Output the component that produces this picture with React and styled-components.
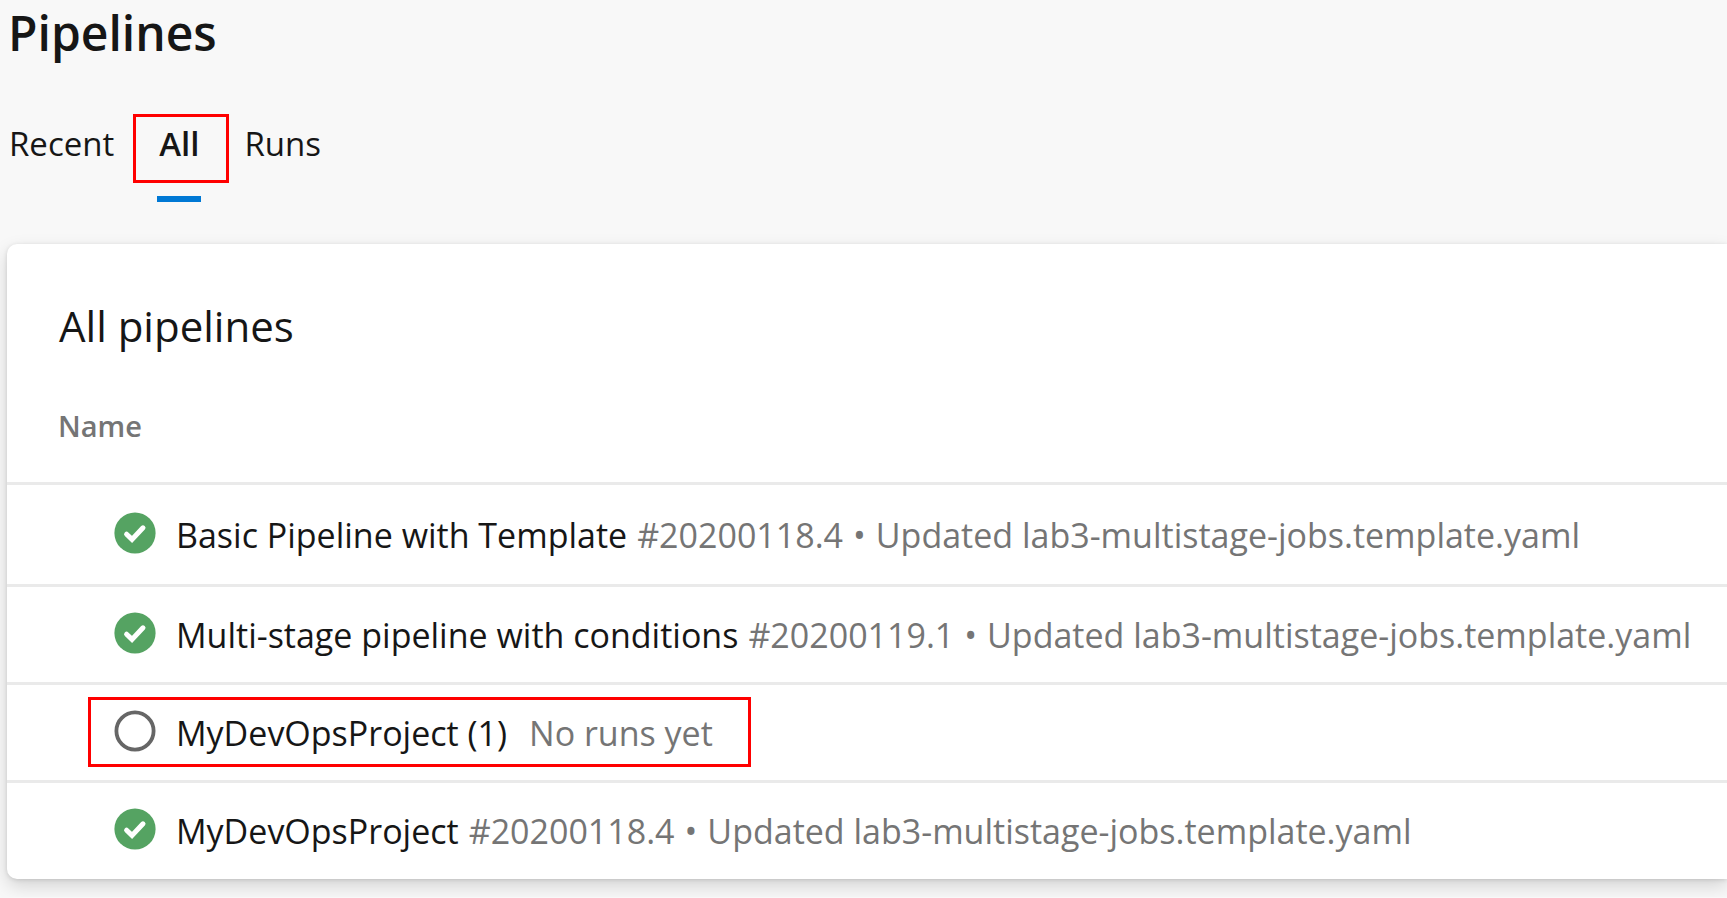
import React, { useState } from "react";
import styled, { createGlobalStyle, css } from "styled-components";

const GlobalStyle = createGlobalStyle`
  *, *::before, *::after { box-sizing: border-box; }
  body {
    margin: 0;
    background: #f8f8f8;
    color: #161616;
    font-family: "Segoe UI", "Open Sans", "Noto Sans", sans-serif;
  }
`;

const highlightFrame = css`
  content: "";
  position: absolute;
  border: 3px solid #ff0000;
  pointer-events: none;
`;

const Page = styled.main`
  display: flex;
  flex-direction: column;
  padding: 0 0 18px 7px;
  overflow-x: hidden;
`;

const PageTitle = styled.h1`
  margin: 0;
  padding-left: 1px;
  font-size: 48px;
  font-weight: 600;
  line-height: 66px;
`;

const Tabs = styled.div`
  display: flex;
  gap: 43px;
  margin-top: 48px;
  padding-left: 2px;
`;

const Tab = styled.button`
  position: relative;
  height: 88px;
  padding: 0 ${(p) => (p.$active ? "2px" : "0")} 22px;
  border: 0;
  border-bottom: 6px solid ${(p) => (p.$active ? "#0078d4" : "transparent")};
  background: none;
  color: inherit;
  font-family: inherit;
  font-size: 33px;
  font-weight: ${(p) => (p.$active ? 600 : 400)};
  line-height: 60px;
  cursor: pointer;

  ${(p) =>
    p.$highlighted &&
    css`
      &::after {
        ${highlightFrame}
        inset: 0 -28px 13px -24px;
      }
    `}
`;

const Card = styled.section`
  margin-top: 42px;
  padding: 52px 0 1px;
  border-radius: 10px 0 0 10px;
  background: #ffffff;
  box-shadow: 0 7px 18px rgba(0, 0, 0, 0.15), 0 1px 4px rgba(0, 0, 0, 0.12);
`;

const CardTitle = styled.h2`
  margin: 0 0 50px;
  padding-left: 52px;
  font-size: 42px;
  font-weight: 400;
  line-height: 60px;
`;

const Table = styled.table`
  width: 100%;
  border-collapse: separate;
  border-spacing: 0;
`;

const HeaderCell = styled.th`
  padding: 0 0 36px 51px;
  color: #757575;
  font-size: 29px;
  font-weight: 600;
  line-height: 40px;
  text-align: left;
`;

const Row = styled.tr`
  &:first-child > td { padding-top: 2px; padding-bottom: 2px; }
`;

const Cell = styled.td`
  padding: 0 0 0 107px;
  border-top: 3px solid #eaeaea;
`;

const Pipeline = styled.div`
  position: relative;
  display: inline-flex;
  align-items: center;
  gap: 20px;
  height: 95px;
  vertical-align: top;
  font-size: 34px;
  line-height: 48px;
  white-space: nowrap;

  ${(p) =>
    p.$highlighted &&
    css`
      &::after {
        ${highlightFrame}
        inset: 12px -38px 13px -26px;
      }
    `}
`;

const StatusIcon = styled.svg`
  flex: none;
  width: 42px;
  height: 42px;
  margin-bottom: 4px;
`;

const Details = styled.div`
  display: flex;
  gap: ${(p) => (p.$wide ? "22px" : "10px")};
`;

const PipelineLink = styled.a`
  color: inherit;
  text-decoration: none;
`;

const Meta = styled.span`
  color: #757575;
`;

const pipelines = [
  { name: "Basic Pipeline with Template", run: "#20200118.4", message: "Updated lab3-multistage-jobs.template.yaml" },
  { name: "Multi-stage pipeline with conditions", run: "#20200119.1", message: "Updated lab3-multistage-jobs.template.yaml" },
  { name: "MyDevOpsProject (1)", highlighted: true },
  { name: "MyDevOpsProject", run: "#20200118.4", message: "Updated lab3-multistage-jobs.template.yaml" },
];

function Status({ succeeded }) {
  return succeeded ? (
    <StatusIcon viewBox="0 0 42 42" role="img" aria-label="Succeeded">
      <circle cx="21" cy="21" r="20.6" fill="#55a362" />
      <path d="M12.6 22.2 L18 27.4 L29 15.8" fill="none" stroke="#fff" strokeWidth="5" strokeLinecap="round" />
    </StatusIcon>
  ) : (
    <StatusIcon viewBox="0 0 42 42" role="img" aria-label="Not run">
      <circle cx="21" cy="21" r="18.6" fill="none" stroke="#666" strokeWidth="3.8" />
    </StatusIcon>
  );
}

function PipelineRow({ name, run, message, highlighted }) {
  return (
    <Row>
      <Cell>
        <Pipeline $highlighted={highlighted}>
          <Status succeeded={Boolean(run)} />
          <Details $wide={!run}>
            <PipelineLink href="#">{name}</PipelineLink>
            {run ? (
              <>
                <Meta>{run}</Meta>
                <Meta>•</Meta>
                <Meta>{message}</Meta>
              </>
            ) : (
              <Meta>No runs yet</Meta>
            )}
          </Details>
        </Pipeline>
      </Cell>
    </Row>
  );
}

export default function App() {
  const [active, setActive] = useState("All");
  return (
    <>
      <GlobalStyle />
      <Page>
        <PageTitle>Pipelines</PageTitle>
        <Tabs role="tablist">
          {["Recent", "All", "Runs"].map((label) => (
            <Tab
              key={label}
              type="button"
              role="tab"
              aria-selected={active === label}
              $active={active === label}
              $highlighted={label === "All"}
              onClick={() => setActive(label)}
            >
              {label}
            </Tab>
          ))}
        </Tabs>
        <Card>
          <CardTitle>All pipelines</CardTitle>
          <Table>
            <thead>
              <tr>
                <HeaderCell scope="col">Name</HeaderCell>
              </tr>
            </thead>
            <tbody>
              {pipelines.map((p) => (
                <PipelineRow key={p.name} {...p} />
              ))}
            </tbody>
          </Table>
        </Card>
      </Page>
    </>
  );
}
